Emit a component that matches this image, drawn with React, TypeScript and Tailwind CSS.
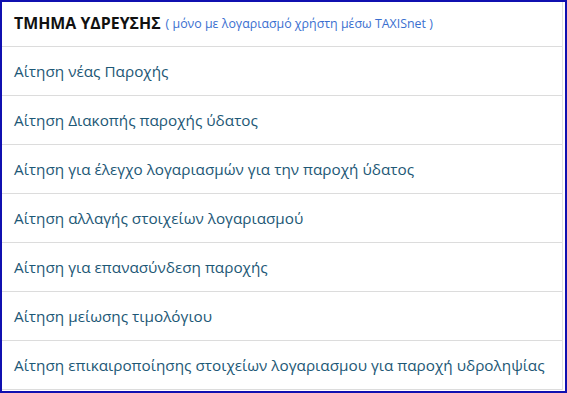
import React from 'react';

const items = [
  'Αίτηση νέας Παροχής',
  'Αίτηση Διακοπής παροχής ύδατος',
  'Αίτηση για έλεγχο λογαριασμών για την παροχή ύδατος',
  'Αίτηση αλλαγής στοιχείων λογαριασμού',
  'Αίτηση για επανασύνδεση παροχής',
  'Αίτηση μείωσης τιμολόγιου',
  'Αίτηση επικαιροποίησης στοιχείων λογαριασμου για παροχή υδροληψίας',
];

export default function App() {
  return (
    <div
      className="w-[567px] h-[393px] overflow-hidden border-2 border-[#1010b0] bg-white"
      style={{ fontFamily: '"Open Sans", "Noto Sans", sans-serif' }}
    >
      <div className="border-r border-[#e2e2e2] mr-[2px]">
        {/* header */}
        <div className="h-[45px] flex items-center px-3 border-b border-[#dcdcdc]">
          <span className="text-[15.9px] font-bold text-[#111]">ΤΜΗΜΑ ΥΔΡΕΥΣΗΣ</span>
          <span className="ml-[5px] text-[12.4px] text-[#3a6fd0]">( μόνο με λογαριασμό χρήστη μέσω TAXISnet )</span>
        </div>

        {items.map((item) => (
          <div
            key={item}
            className="h-[49px] flex items-center px-3 border-b border-[#dcdcdc] text-[15.3px] text-[#1d5876]"
          >
            {item}
          </div>
        ))}
      </div>
    </div>
  );
}
